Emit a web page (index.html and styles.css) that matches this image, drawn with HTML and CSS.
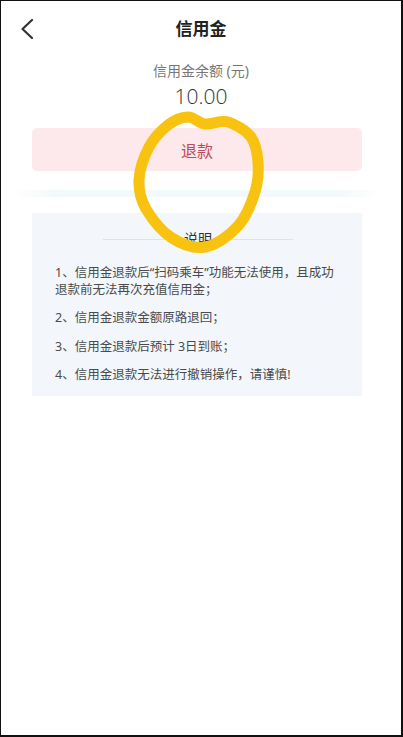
FILE: index.html
```html
<!DOCTYPE html>
<html lang="zh-CN">
<head>
<meta charset="utf-8">
<title>信用金</title>
<link rel="stylesheet" href="styles.css">
</head>
<body>
<div class="screen">
  <header class="topbar">
    <span class="back">
      <svg width="14" height="20" viewBox="0 0 14 20"><path d="M12 1 L2.5 10 L12 19" fill="none" stroke="#333" stroke-width="2.2" stroke-linecap="round" stroke-linejoin="round"/></svg>
    </span>
    <h1 class="title">信用金</h1>
  </header>
  <section class="balance">
    <div class="balance-label">信用金余额 (元)</div>
    <div class="balance-amount">10.00</div>
  </section>
  <button class="refund-btn">退款</button>
  <div class="band"></div>
  <section class="notice">
    <div class="notice-title"><span>说明</span></div>
    <p class="notice-item">1、信用金退款后“扫码乘车”功能无法使用，且成功退款前无法再次充值信用金；</p>
    <p class="notice-item">2、信用金退款金额原路退回；</p>
    <p class="notice-item">3、信用金退款后预计 3日到账；</p>
    <p class="notice-item">4、信用金退款无法进行撤销操作，请谨慎!</p>
  </section>
</div>
<svg class="scribble" width="403" height="737" viewBox="0 0 403 737">
  <path d="M188 117 C194.2 116.7 198.3 123.3 205 124 C211.7 124.7 220.5 119.8 228 122 C235.5 124.2 246.2 130.3 251 137 C255.8 143.7 257.3 152.8 258 162 C258.7 171.2 258.3 181.5 255 192 C251.7 202.5 246.2 217 238 226 C229.8 235 216.8 245 205 247 C193.2 249 181.7 244.2 172 238 C162.3 231.8 152.3 219.5 146 209 C140.7 199.5 138.5 190.2 139 180 C139.5 169.8 144.3 156 149 147 C153.7 138 161.7 130 168 125 C174.3 120 181.8 117.3 188 117 Z" fill="none" stroke="#f8c310" stroke-width="11" stroke-linecap="round" stroke-linejoin="round"/>
</svg>
</body>
</html>
```

FILE: styles.css
```css
html, body {
  margin: 0;
  padding: 0;
  background: #ffffff;
}
body {
  position: relative;
  width: 403px;
  height: 737px;
  overflow: hidden;
  font-family: "Noto Sans", "Noto Sans CJK SC", sans-serif;
}
.screen {
  box-sizing: border-box;
  width: 403px;
  height: 737px;
  border-style: solid;
  border-color: #111;
  border-width: 1px 2px 2px 1px;
  background: #fff;
  display: flex;
  flex-direction: column;
}
.topbar {
  position: relative;
  height: 56px;
  display: flex;
  align-items: center;
  justify-content: center;
}
.back {
  position: absolute;
  left: 19px;
  top: 18px;
  width: 14px;
  height: 20px;
  display: flex;
}
.title {
  margin: 0;
  font-size: 17px;
  font-weight: 700;
  color: #222;
  line-height: 24px;
}
.balance {
  margin-top: 4px;
  display: flex;
  flex-direction: column;
  align-items: center;
}
.balance-label {
  font-size: 14px;
  line-height: 20px;
  color: #777;
}
.balance-amount {
  margin-top: 1px;
  font-family: "Open Sans", "Noto Sans", sans-serif;
  font-weight: 300;
  font-size: 21px;
  line-height: 28px;
  color: #333;
}
.refund-btn {
  margin: 18px 0 0 31px;
  width: 330px;
  height: 43px;
  border: none;
  border-radius: 5px;
  background: #fde9eb;
  color: #bd4b60;
  font-family: "Noto Sans", "Noto Sans CJK SC", sans-serif;
  font-size: 16px;
  padding: 0;
}
.band {
  margin: 19px 0 0 12px;
  width: 369px;
  height: 7px;
  background: linear-gradient(90deg, rgba(242,249,250,0) 0%, #f2f9fa 12%, #f2f9fa 88%, rgba(242,249,250,0) 100%);
}
.notice {
  margin: 16px 0 0 31px;
  width: 330px;
  box-sizing: border-box;
  padding: 14px 22px 12px 23px;
  background: #f3f7fb;
}
.notice-title {
  position: relative;
  display: flex;
  justify-content: center;
  height: 24px;
  margin: 0 47px 0 48px;
}
.notice-title::before {
  content: "";
  position: absolute;
  left: 0;
  right: 0;
  top: 12px;
  height: 1px;
  background: #dfe3e8;
}
.notice-title span {
  position: relative;
  font-size: 14px;
  line-height: 24px;
  color: #333;
}
.notice-item {
  margin: 0;
  font-size: 12.5px;
  line-height: 16.5px;
  color: #4a4a4a;
}
.notice-title + .notice-item {
  margin-top: 14px;
}
.notice-item + .notice-item {
  margin-top: 12px;
}
.scribble {
  position: absolute;
  left: 0;
  top: 0;
  pointer-events: none;
}
```
